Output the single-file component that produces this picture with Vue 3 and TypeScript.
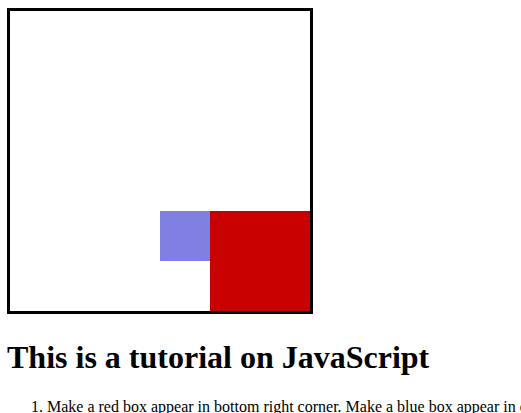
<script setup lang="ts">
import { onMounted, ref } from 'vue'

const canvas = ref<HTMLCanvasElement | null>(null)

const steps: string[] = [
  'Make a red box appear in bottom right corner. Make a blue box appear in center.',
]

onMounted(() => {
  const ctx = canvas.value?.getContext('2d')
  if (!ctx) return
  ctx.fillStyle = 'rgb(200, 0, 0)'
  ctx.fillRect(200, 200, 100, 100)
  ctx.fillStyle = 'rgb(128, 128, 227)'
  ctx.fillRect(150, 200, 50, 50)
})
</script>

<template>
  <main class="page">
    <canvas ref="canvas" class="board" width="300" height="300"></canvas>
    <h1 class="title">This is a tutorial on JavaScript</h1>
    <ol class="steps">
      <li v-for="step in steps" :key="step">{{ step }}</li>
    </ol>
  </main>
</template>

<style>
html {
  overflow: hidden;
}
</style>

<style scoped>
.page {
  padding: 8px 0 8px 7px;
  font-family: "Liberation Serif", "Times New Roman", serif;
  font-size: 16px;
  color: #000;
}

.board {
  display: block;
  border: 3px solid #000;
}

.title {
  margin: 24px 0 20px;
  font-size: 32px;
  line-height: 38px;
  font-weight: bold;
}

.steps {
  margin: 0;
  padding-left: 40px;
  line-height: 22px;
  white-space: nowrap;
  overflow: hidden;
}
</style>
